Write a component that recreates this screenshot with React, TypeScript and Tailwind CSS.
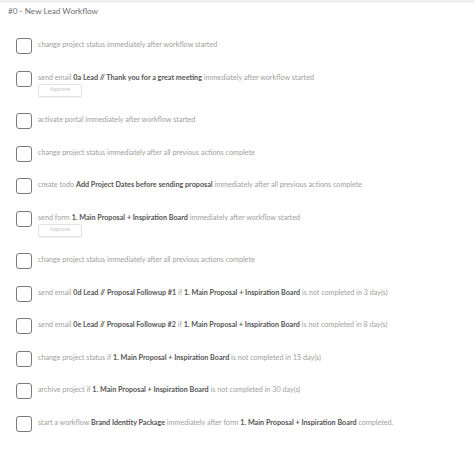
import React from 'react';

type Part = string | { b: string };
type Step = { parts: Part[]; approve?: boolean };

const steps: Step[] = [
  { parts: ['change project status immediately after workflow started'] },
  { parts: ['send email ', { b: '0a Lead // Thank you for a great meeting' }, ' immediately after workflow started'], approve: true },
  { parts: ['activate portal immediately after workflow started'] },
  { parts: ['change project status immediately after all previous actions complete'] },
  { parts: ['create todo ', { b: 'Add Project Dates before sending proposal' }, ' immediately after all previous actions complete'] },
  { parts: ['send form ', { b: '1. Main Proposal + Inspiration Board' }, ' immediately after workflow started'], approve: true },
  { parts: ['change project status immediately after all previous actions complete'] },
  { parts: ['send email ', { b: '0d Lead // Proposal Followup #1' }, ' if ', { b: '1. Main Proposal + Inspiration Board' }, ' is not completed in 3 day(s)'] },
  { parts: ['send email ', { b: '0e Lead // Proposal Followup #2' }, ' if ', { b: '1. Main Proposal + Inspiration Board' }, ' is not completed in 8 day(s)'] },
  { parts: ['change project status if ', { b: '1. Main Proposal + Inspiration Board' }, ' is not completed in 15 day(s)'] },
  { parts: ['archive project if ', { b: '1. Main Proposal + Inspiration Board' }, ' is not completed in 30 day(s)'] },
  { parts: ['start a workflow ', { b: 'Brand Identity Package' }, ' immediately after form ', { b: '1. Main Proposal + Inspiration Board' }, ' completed.'] },
];

function StepRow({ step }: { step: Step }) {
  return (
    <div className="flex items-start gap-[6px] pl-4 mb-[16.5px]">
      <div className="w-4 h-4 shrink-0 rounded-[3px] border-[1.5px] border-[#7a7a7a] bg-white" />
      <div className="flex flex-col items-start">
        <p className="text-[7.2px] leading-[13px] text-[#a0a0a0] whitespace-nowrap">
          {step.parts.map((p, i) =>
            typeof p === 'string'
              ? <span key={i}>{p}</span>
              : <span key={i} className="font-bold text-[#555555]">{p.b}</span>
          )}
        </p>
        {step.approve && (
          <button className="w-[44px] h-[13px] rounded-[2px] border border-[#e2e2e2] bg-white text-[5.5px] leading-none text-[#c8c8c8] shadow-[0_1px_1px_rgba(0,0,0,0.05)]">
            Approve
          </button>
        )}
      </div>
    </div>
  );
}

export default function App() {
  return (
    <div className="w-[474px] h-[452px] bg-white overflow-hidden font-['Lato',sans-serif]">
      <div className="h-[3px] bg-[#f0f0f0]" />
      <h1 className="pl-2 pt-[2px] text-[8.2px] leading-[12px] text-[#707070]">#0 - New Lead Workflow</h1>
      <div className="pt-[21px]">
        {steps.map((s, i) => <StepRow key={i} step={s} />)}
      </div>
    </div>
  );
}
